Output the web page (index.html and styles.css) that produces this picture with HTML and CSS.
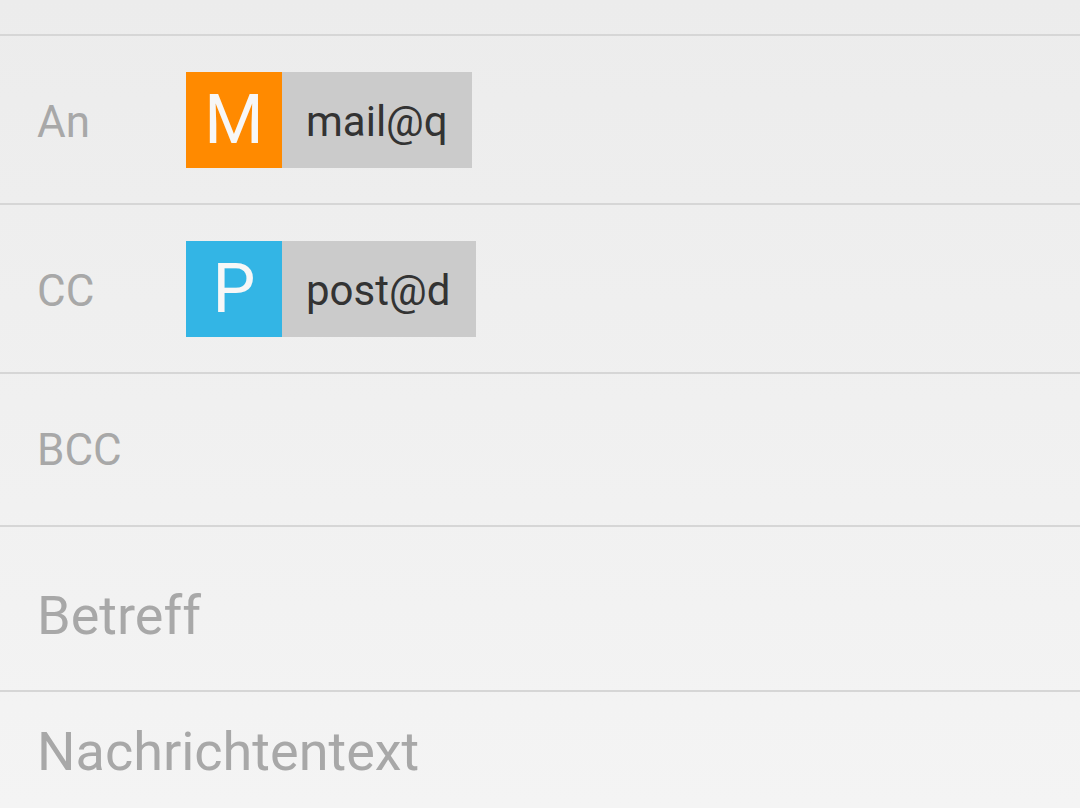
FILE: index.html
```html
<!DOCTYPE html>
<html lang="de">
<head>
<meta charset="utf-8">
<link rel="stylesheet" href="styles.css">
</head>
<body>
<div class="compose">
  <div class="topbar"></div>
  <div class="row row-chip">
    <div class="label">An</div>
    <div class="chip">
      <div class="avatar orange">M</div>
      <div class="chip-text">mail@q</div>
    </div>
  </div>
  <div class="row row-chip">
    <div class="label">CC</div>
    <div class="chip chip-wide">
      <div class="avatar blue">P</div>
      <div class="chip-text">post@d</div>
    </div>
  </div>
  <div class="row row-bcc">
    <div class="label">BCC</div>
  </div>
  <div class="row row-subject">
    <div class="big">Betreff</div>
  </div>
  <div class="body-field">
    <div class="big">Nachrichtentext</div>
  </div>
</div>
</body>
</html>
```

FILE: styles.css
```css
html, body {
  margin: 0;
  padding: 0;
  height: 100%;
}
body {
  font-family: Roboto, "Noto Sans", sans-serif;
  background: linear-gradient(#ececec, #f4f4f4);
  overflow: hidden;
}
.compose {
  display: flex;
  flex-direction: column;
  height: 808px;
}
.topbar {
  height: 34px;
  border-bottom: 2px solid #d6d6d6;
}
.row {
  display: flex;
  align-items: center;
  border-bottom: 2px solid #d6d6d6;
  padding-left: 37px;
}
.row-chip {
  height: 167px;
}
.row-bcc {
  height: 151px;
}
.row-subject {
  height: 163px;
}
.label {
  width: 149px;
  font-size: 44px;
  color: #a8a8a8;
}
.row-chip .label {
  padding-top: 4px;
}
.chip {
  display: flex;
  width: 286px;
  height: 96px;
  background: #cbcbcb;
  margin-top: 1px;
}
.chip-wide {
  width: 290px;
}
.avatar {
  width: 96px;
  height: 96px;
  display: flex;
  align-items: center;
  justify-content: center;
  color: #f7f7f7;
  font-size: 68px;
}
.orange {
  background: #ff8a00;
}
.blue {
  background: #33b5e5;
}
.chip-text {
  flex: 1;
  display: flex;
  align-items: center;
  padding-left: 24px;
  padding-top: 3px;
  font-size: 42px;
  color: #333333;
}
.big {
  font-size: 54px;
  color: #a8a8a8;
}
.row-subject .big {
  margin-top: 14px;
}
.body-field {
  flex: 1;
  padding-left: 37px;
  padding-top: 28px;
}
```
